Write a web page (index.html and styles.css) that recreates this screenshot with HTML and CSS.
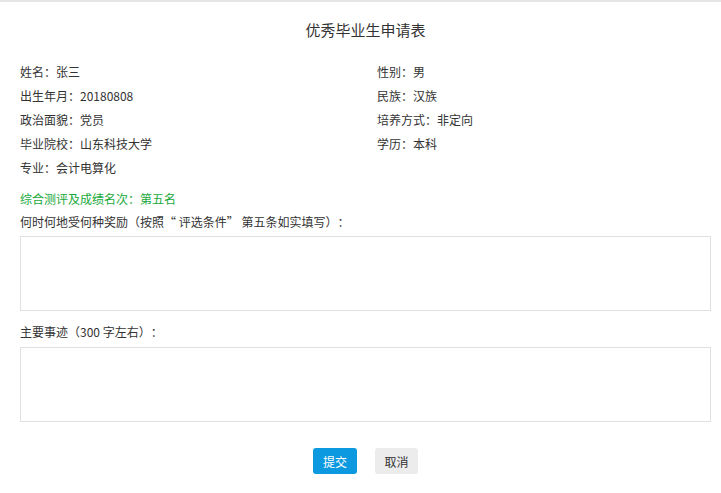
FILE: index.html
```html
<!DOCTYPE html>
<html lang="zh">
<head>
<meta charset="utf-8">
<title>优秀毕业生申请表</title>
<link rel="stylesheet" href="styles.css">
</head>
<body>
<div class="topbar"></div>
<div class="page">
  <h1 class="title">优秀毕业生申请表</h1>
  <div class="info">
    <div class="item">姓名：张三</div>
    <div class="item">性别：男</div>
    <div class="item">出生年月：20180808</div>
    <div class="item">民族：汉族</div>
    <div class="item">政治面貌：党员</div>
    <div class="item">培养方式：非定向</div>
    <div class="item">毕业院校：山东科技大学</div>
    <div class="item">学历：本科</div>
    <div class="item">专业：会计电算化</div>
  </div>
  <div class="rank">综合测评及成绩名次：第五名</div>
  <div class="label">何时何地受何种奖励（按照“ 评选条件” 第五条如实填写）：</div>
  <textarea class="box"></textarea>
  <div class="label label2">主要事迹（300 字左右）：</div>
  <textarea class="box"></textarea>
  <div class="actions">
    <button class="btn btn-primary">提交</button>
    <button class="btn btn-default">取消</button>
  </div>
</div>
</body>
</html>
```
FILE: styles.css
```css
html, body {
  margin: 0;
  padding: 0;
  background: #fff;
}
body {
  font-family: "Microsoft YaHei", "Noto Sans CJK SC", "Liberation Sans", sans-serif;
  color: #333;
  font-size: 12px;
  text-spacing-trim: space-all;
}
.topbar {
  height: 2px;
  background: #e6e6e6;
}
.page {
  padding: 0 10px 0 20px;
}
.title {
  margin: 0;
  font-size: 15px;
  font-weight: normal;
  text-align: center;
  line-height: 20px;
  padding: 18px 0 20px 0;
  color: #333;
}
.info {
  display: grid;
  grid-template-columns: 357px 1fr;
}
.item {
  line-height: 24px;
  height: 24px;
}
.rank {
  margin-top: 7px;
  line-height: 24px;
  color: #17a83a;
}
.label {
  line-height: 22px;
}
.label2 {
  margin-top: 9px;
  line-height: 24px;
}
.box {
  display: block;
  box-sizing: border-box;
  width: 100%;
  height: 75px;
  margin: 3px 0 0 0;
  border: 1px solid #e0e0e0;
  resize: none;
  outline: none;
  padding: 4px;
}
.actions {
  display: flex;
  justify-content: center;
  gap: 18px;
  margin-top: 26px;
}
.btn {
  height: 26px;
  border: none;
  border-radius: 3px;
  font-family: inherit;
  font-size: 12px;
  padding: 0;
  cursor: pointer;
  white-space: nowrap;
}
.btn-primary {
  background: #0d99df;
  color: #fff;
  width: 44px;
}
.btn-default {
  background: #ececec;
  color: #333;
  width: 43px;
}
```
